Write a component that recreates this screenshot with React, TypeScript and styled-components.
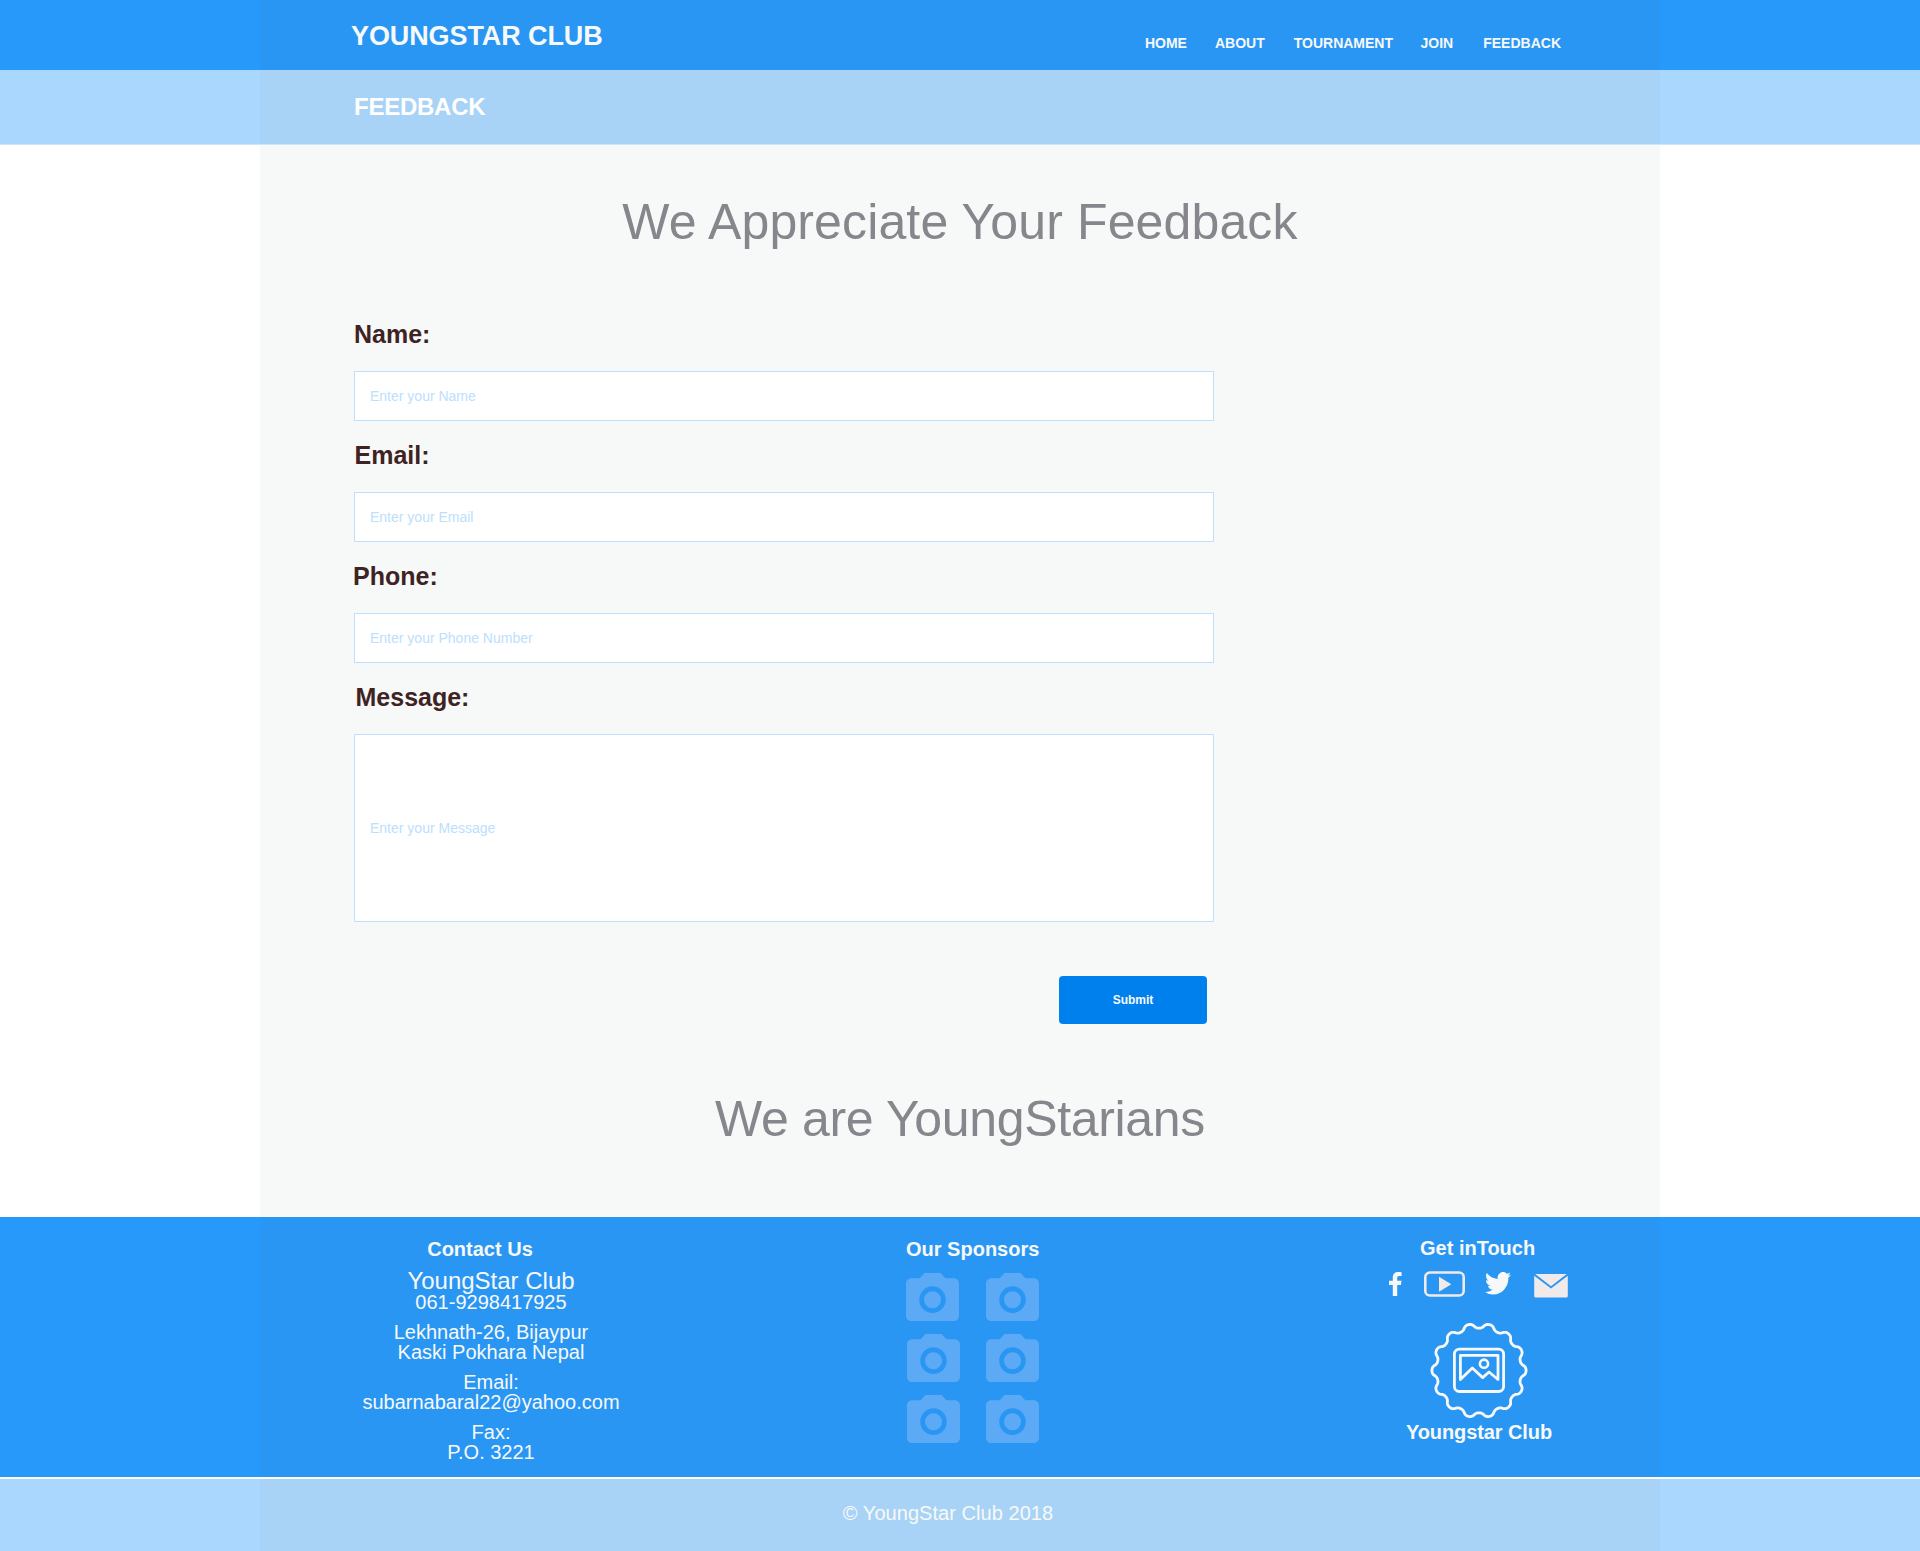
import React from "react";
import styled, { createGlobalStyle } from "styled-components";

const GlobalStyle = createGlobalStyle`
  * { box-sizing: border-box; }
  body {
    margin: 0;
    background: #ffffff;
    font-family: "Liberation Sans", Arial, Helvetica, sans-serif;
  }
  h1, h2, h3, p { margin: 0; }
`;

const Page = styled.div`
  width: 1920px;
  height: 1551px;
  display: flex;
  flex-direction: column;
  background: #ffffff;
`;

const Bar = styled.div<{ $height: number; $color: string }>`
  height: ${(p) => p.$height}px;
  flex: none;
  display: flex;
  justify-content: center;
  background: ${(p) => p.$color};
`;

const HeaderInner = styled.header`
  width: 1400px;
  padding: 23px 99px 0 91px;
  display: flex;
  justify-content: space-between;
  align-items: flex-start;
  background: #2a96f4;
`;

const Brand = styled.h1`
  font-size: 27px;
  line-height: 27px;
  font-weight: 700;
  letter-spacing: -0.1px;
  color: #f7f9f9;
  white-space: nowrap;
`;

const Nav = styled.nav`
  display: flex;
  padding-top: 13px;
`;

const NavLink = styled.a<{ $gap: number }>`
  margin-left: ${(p) => p.$gap}px;
  font-size: 14px;
  line-height: 14px;
  font-weight: 700;
  color: #f7f9f9;
  text-decoration: none;
`;

const BandInner = styled.div`
  width: 1400px;
  padding: 25px 0 0 94px;
  background: #a8d3f6;
`;

const TitleBar = styled(Bar)`
  border-bottom: 1px solid #cfe6f9;
`;

const PageTitle = styled.h2`
  font-size: 24px;
  line-height: 24px;
  font-weight: 700;
  letter-spacing: -0.25px;
  color: #ffffff;
`;

const Main = styled.main`
  width: 1400px;
  height: 1072px;
  flex: none;
  align-self: center;
  padding-top: 52px;
  display: flex;
  flex-direction: column;
  background: #f7f9f9;
`;

const Headline = styled.h2<{ $spacing?: number }>`
  font-size: 50px;
  line-height: 50px;
  font-weight: 400;
  letter-spacing: ${(p) => p.$spacing ?? 0}px;
  text-align: center;
  color: #86868c;
`;

const Form = styled.form`
  width: 860px;
  margin: 75px 0 70px 94px;
  display: flex;
  flex-direction: column;
`;

const Label = styled.label<{ $shift: number }>`
  margin-left: ${(p) => p.$shift}px;
  font-size: 25px;
  line-height: 25px;
  font-weight: 700;
  color: #3f2323;
`;

const Input = styled.input<{ $height?: number; $after?: number }>`
  width: 860px;
  height: ${(p) => p.$height ?? 50}px;
  margin: 24px 0 ${(p) => p.$after ?? 22}px;
  padding: 0 15px;
  border: 1px solid #bce0fd;
  border-radius: 0;
  background: #ffffff;
  font: 14px "Liberation Sans", Arial, sans-serif;
  &::placeholder {
    color: #bce0fd;
    opacity: 1;
  }
`;

const Submit = styled.button`
  width: 148px;
  height: 48px;
  margin-right: 7px;
  align-self: flex-end;
  padding: 0;
  border: 0;
  border-radius: 4px;
  background: #0080ed;
  color: #f7f9f9;
  font: 700 12px "Liberation Sans", Arial, sans-serif;
`;

const FooterInner = styled.footer`
  width: 1400px;
  padding: 22px 0 0 101px;
  display: flex;
  align-items: flex-start;
  background: #2a96f4;
`;

const FooterTitle = styled.h3<{ $shift?: number }>`
  margin-left: ${(p) => p.$shift ?? 0}px;
  font-size: 20px;
  line-height: 20px;
  font-weight: 700;
  color: #f7f9f9;
  white-space: nowrap;
`;

const Contact = styled.section`
  width: 260px;
  text-align: center;
  color: #f7f9f9;
`;

const ClubName = styled.p`
  margin-top: 10px;
  font-size: 24px;
  line-height: 24px;
`;

const Lines = styled.p<{ $gap?: number }>`
  margin-top: ${(p) => p.$gap ?? 10}px;
  font-size: 20px;
  line-height: 20px;
  white-space: nowrap;
`;

const Sponsors = styled.section`
  width: 134px;
  margin-left: 285px;
`;

const SponsorGrid = styled.div`
  margin-top: 14px;
  display: grid;
  grid-template-columns: 53px 53px;
  column-gap: 27px;
  row-gap: 13px;
`;

const CameraSlot = styled.div<{ $shift: number }>`
  height: 48px;
  margin-left: ${(p) => p.$shift}px;
  svg { display: block; }
`;

const Touch = styled.section`
  width: 180px;
  margin: -1px 0 0 348px;
`;

const SocialRow = styled.div`
  height: 27px;
  margin-top: 13px;
  padding-left: 2px;
  display: flex;
  align-items: flex-start;
  svg { display: block; flex: none; }
`;

const Social = styled.span<{ $left: number; $top?: number }>`
  margin-left: ${(p) => p.$left}px;
  padding-top: ${(p) => p.$top ?? 0}px;
`;

const Emblem = styled.div`
  margin: 24px 0 0 42px;
  svg { display: block; }
`;

const EmblemName = styled.p`
  margin-left: 18px;
  margin-top: 3px;
  font-size: 20px;
  line-height: 20px;
  font-weight: 700;
  letter-spacing: -0.1px;
  color: #f7f9f9;
  white-space: nowrap;
`;

const CopyrightBar = styled(Bar)`
  margin-top: 2px;
`;

const CopyrightInner = styled.div`
  width: 1400px;
  padding: 24px 24px 0 0;
  background: #a8d3f6;
  text-align: center;
  font-size: 20px;
  line-height: 20px;
  letter-spacing: 0.05px;
  color: #f7f9f9;
`;

const Camera = () => (
  <svg width="53" height="48" viewBox="2 2 20 18" preserveAspectRatio="none" fill="#5caaf5">
    <circle cx="12" cy="12" r="3.2" />
    <path d="M9 2L7.17 4H4c-1.1 0-2 .9-2 2v12c0 1.1.9 2 2 2h16c1.1 0 2-.9 2-2V6c0-1.1-.9-2-2-2h-3.17L15 2H9zm3 15c-2.76 0-5-2.24-5-5s2.24-5 5-5 5 2.24 5 5-2.24 5-5 5z" />
  </svg>
);

// Scalloped outline with fourteen lobes around the emblem centre.
const sealPoints = Array.from({ length: 281 }, (_, i) => {
  const t = (i / 280) * Math.PI * 2;
  const r = 44.7 + 2.4 * Math.cos(14 * t);
  const a = t + 0.013 * Math.sin(28 * t);
  return `${(49 + r * Math.cos(a)).toFixed(2)} ${(48.5 + r * Math.sin(a)).toFixed(2)}`;
});

const Seal = () => (
  <svg width="98" height="97" viewBox="0 0 98 97" fill="none" stroke="#f7f9f9" strokeWidth="2.8" strokeLinejoin="round">
    <path d={`M${sealPoints.join("L")}Z`} />
    <rect x="24.4" y="27.1" width="49.2" height="42.4" rx="5" />
    <path d="M30.4 57.5V33.4H68V57.5L59 50L52.7 55.6L42.3 46L30.4 57.5Z" />
    <circle cx="54" cy="41.7" r="4.1" strokeWidth="2.6" />
  </svg>
);

const fields = [
  { label: "Name:", hint: "Enter your Name", shift: 0 },
  { label: "Email:", hint: "Enter your Email", shift: 0.5 },
  { label: "Phone:", hint: "Enter your Phone Number", shift: -1 },
];

const links = [
  { text: "HOME", gap: 0 },
  { text: "ABOUT", gap: 28 },
  { text: "TOURNAMENT", gap: 29 },
  { text: "JOIN", gap: 27.5 },
  { text: "FEEDBACK", gap: 30 },
];

export default function App() {
  return (
    <Page>
      <GlobalStyle />
      <Bar $height={70} $color="#2699fb">
        <HeaderInner>
          <Brand>YOUNGSTAR CLUB</Brand>
          <Nav>
            {links.map((l) => (
              <NavLink key={l.text} $gap={l.gap}>{l.text}</NavLink>
            ))}
          </Nav>
        </HeaderInner>
      </Bar>
      <TitleBar $height={75} $color="#aad7fd">
        <BandInner>
          <PageTitle>FEEDBACK</PageTitle>
        </BandInner>
      </TitleBar>
      <Main>
        <Headline $spacing={0.13}>We Appreciate Your Feedback</Headline>
        <Form>
          {fields.map((f) => (
            <React.Fragment key={f.label}>
              <Label $shift={f.shift}>{f.label}</Label>
              <Input placeholder={f.hint} />
            </React.Fragment>
          ))}
          <Label $shift={1.5}>Message:</Label>
          <Input placeholder="Enter your Message" $height={188} $after={54} />
          <Submit type="button">Submit</Submit>
        </Form>
        <Headline $spacing={-0.34}>We are YoungStarians</Headline>
      </Main>
      <Bar $height={260} $color="#2699fb">
        <FooterInner>
          <Contact>
            <FooterTitle $shift={-22}>Contact Us</FooterTitle>
            <ClubName>YoungStar Club</ClubName>
            <Lines $gap={-1}>061-9298417925</Lines>
            <Lines>Lekhnath-26, Bijaypur<br />Kaski Pokhara Nepal</Lines>
            <Lines>Email:<br />subarnabaral22@yahoo.com</Lines>
            <Lines>Fax:<br />P.O. 3221</Lines>
          </Contact>
          <Sponsors>
            <FooterTitle>Our Sponsors</FooterTitle>
            <SponsorGrid>
              {[0, 0, 1, 0, 1, 0].map((shift, i) => (
                <CameraSlot key={i} $shift={shift}><Camera /></CameraSlot>
              ))}
            </SponsorGrid>
          </Sponsors>
          <Touch>
            <FooterTitle $shift={32}>Get inTouch</FooterTitle>
            <SocialRow>
              <Social $left={-1} $top={1}>
                <svg width="13" height="24" viewBox="0 0 13 24" fill="#f7f9f9">
                  <path d="M12.6 0.2V4.1H10.4C8.6 4.1 8.2 5 8.2 6.3V8.7H12.5L11.9 12.9H8.2V24H3.8V12.9H0V8.7H3.8V5.5C3.8 2 6 0 9.3 0C10.8 0 12.2.1 12.6.2Z" />
                </svg>
              </Social>
              <Social $left={22}>
                <svg width="41" height="26" viewBox="0 0 41 26" fill="none">
                  <rect x="1.3" y="1.5" width="38.4" height="23" rx="4.5" stroke="#f0eaea" strokeWidth="2.6" />
                  <path d="M15 5.7V20.7L27.3 13.2Z" fill="#f0eaea" />
                </svg>
              </Social>
              <Social $left={20} $top={1}>
                <svg width="26" height="23" viewBox="0 2.2 24 20" preserveAspectRatio="none" fill="#f7f9f9">
                  <path d="M23.953 4.57a10 10 0 01-2.825.775 4.958 4.958 0 002.163-2.723c-.951.555-2.005.959-3.127 1.184a4.92 4.92 0 00-8.384 4.482C7.69 8.095 4.067 6.13 1.64 3.162a4.822 4.822 0 00-.666 2.475c0 1.71.87 3.213 2.188 4.096a4.904 4.904 0 01-2.228-.616v.06a4.923 4.923 0 003.946 4.827 4.996 4.996 0 01-2.212.085 4.936 4.936 0 004.604 3.417 9.867 9.867 0 01-6.102 2.105c-.39 0-.779-.023-1.17-.067a13.995 13.995 0 007.557 2.209c9.053 0 13.998-7.496 13.998-13.985 0-.21 0-.42-.015-.63A9.935 9.935 0 0024 4.59z" />
                </svg>
              </Social>
              <Social $left={23} $top={3}>
                <svg width="34" height="24" viewBox="0 0 34 24">
                  <path d="M0.2 1.8V22Q0.2 23.6 1.8 23.6H32Q33.8 23.6 33.8 22V1.8L17 14.4Z" fill="#f0eaea" />
                  <path d="M1.2 0H32.8L17 12.2Z" fill="#f0eaea" />
                </svg>
              </Social>
            </SocialRow>
            <Emblem><Seal /></Emblem>
            <EmblemName>Youngstar Club</EmblemName>
          </Touch>
        </FooterInner>
      </Bar>
      <CopyrightBar $height={72} $color="#aad7fd">
        <CopyrightInner>© YoungStar Club 2018</CopyrightInner>
      </CopyrightBar>
    </Page>
  );
}
